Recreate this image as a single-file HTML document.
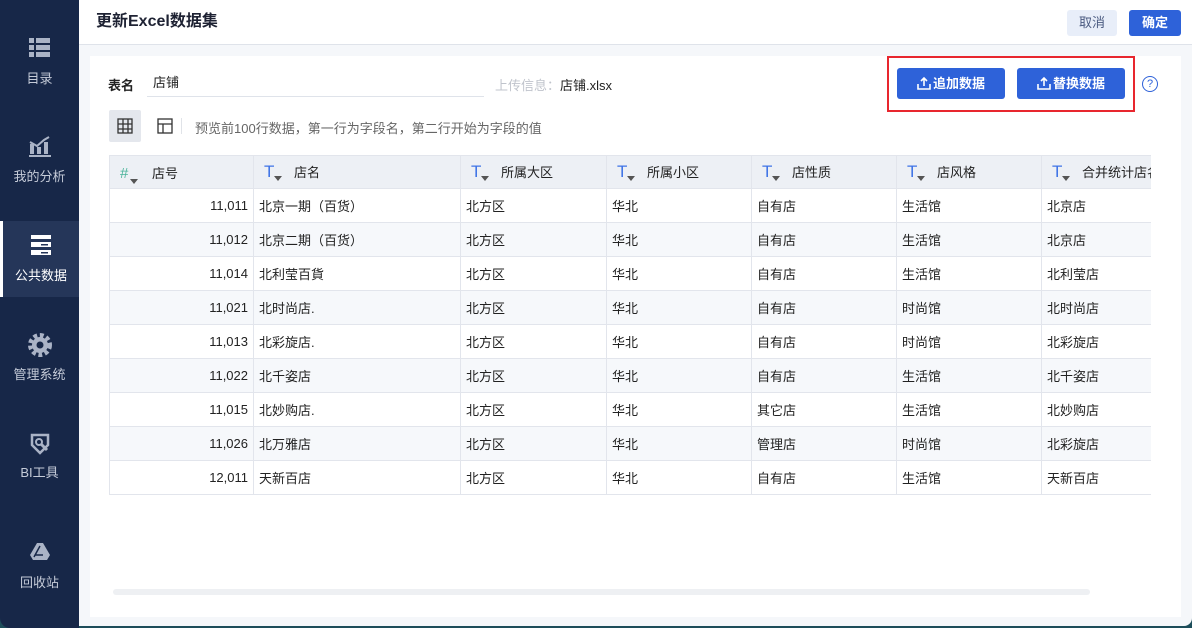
<!DOCTYPE html>
<html><head><meta charset="utf-8"><style>
*{box-sizing:border-box;margin:0;padding:0}
body{width:1192px;height:628px;overflow:hidden;background:#1d4d5a;font-family:"Liberation Sans","Noto Sans CJK SC",sans-serif;position:relative}
.side{position:absolute;left:0;top:0;width:79px;height:628px;background:#172748;border-bottom-left-radius:10px}
.nav{position:absolute;left:0;width:79px;height:70px;text-align:center;color:#c5cbd8;font-size:13px}
.nav .ic{height:26px;margin:12px auto 6px;width:26px;position:relative}
.nav.act{background:#253659;color:#fff;border-left:3px solid #fff}
.main{position:absolute;left:79px;top:0;width:1113px;height:626px;background:#f5f7fa;border-bottom-right-radius:8px}
.hd{height:45px;background:#fff;border-bottom:1px solid #dfe3ea;position:relative}
.hd h1{position:absolute;left:17px;top:12px;font-size:16px;line-height:20px;font-weight:bold;color:#1e2233}
.btn{position:absolute;font-size:13px;border-radius:3px;text-align:center}
.panel{position:absolute;left:11px;top:56px;width:1091px;height:561px;background:#fff}
table{border-collapse:collapse;position:absolute;font-size:13px;color:#222;table-layout:fixed}
td,th{border:1px solid #e2e5ec;height:34px;padding:0 5px;white-space:nowrap;overflow:hidden;font-weight:normal;text-align:left}
th{background:#edf0f5;height:33px;padding-left:10px}
tr:nth-child(odd) td{background:#f6f8fb}
td.n{text-align:right}
.t{color:#3f73e6;font-size:17px;margin-right:20px;position:relative;display:inline-block;width:10px}
.t:after,.h:after{content:"";position:absolute;left:10px;top:14px;border:4px solid transparent;border-top:5px solid #555}
.h{color:#4bb39a;font-size:15px;margin-right:22px;position:relative;display:inline-block;width:10px}
</style></head><body>
<div class="side">
 <div class="nav" style="top:26px"><div class="ic" style="margin-top:10px"><svg width="26" height="22"><g fill="#aab3c6"><rect x="2" y="2" width="5" height="5"/><rect x="9" y="2" width="14" height="5"/><rect x="2" y="9" width="5" height="5"/><rect x="9" y="9" width="14" height="5"/><rect x="2" y="16" width="5" height="5"/><rect x="9" y="16" width="14" height="5"/></g></svg></div>目录</div>
 <div class="nav" style="top:124px"><div class="ic" style="margin-top:10px"><svg width="26" height="24"><g fill="#aab3c6"><rect x="3" y="10" width="4" height="10"/><rect x="10" y="13" width="4" height="7"/><rect x="17" y="8" width="4" height="12"/><rect x="2" y="21" width="22" height="2"/><path d="M3 8l7 4 7-6 5-3" stroke="#aab3c6" stroke-width="2" fill="none"/></g></svg></div>我的分析</div>
 <div class="nav act" style="top:221px;height:76px"><div class="ic" style="margin-top:12px"><svg width="24" height="24"><g fill="#fff"><rect x="2" y="2" width="20" height="4"/><rect x="2" y="9" width="20" height="5"/><rect x="2" y="17" width="20" height="5"/></g><rect x="12" y="11" width="7" height="1.5" fill="#253659"/><rect x="12" y="19" width="7" height="1.5" fill="#253659"/></svg></div>公共数据</div>
 <div class="nav" style="top:322px"><div class="ic" style="margin-top:10px"><svg width="26" height="26"><circle cx="13" cy="13" r="9" fill="none" stroke="#aab3c6" stroke-width="6" stroke-dasharray="3.5 2.5"/><circle cx="13" cy="13" r="8" fill="#aab3c6"/><circle cx="13" cy="13" r="3.5" fill="#172748"/></svg></div>管理系统</div>
 <div class="nav" style="top:420px"><div class="ic" style="margin-top:10px"><svg width="26" height="26"><path d="M5 5h16v10l-8 8-8-8z" fill="none" stroke="#aab3c6" stroke-width="2.5"/><circle cx="12" cy="12" r="3" fill="none" stroke="#aab3c6" stroke-width="2"/><path d="M14 14l6 6" stroke="#aab3c6" stroke-width="3"/></svg></div>BI工具</div>
 <div class="nav" style="top:530px"><div class="ic" style="margin-top:10px"><svg width="26" height="24"><path d="M10 3h6l7 12-3 5H6L3 15z" fill="#aab3c6"/><path d="M13 6l-6 11M16 15H8" stroke="#172748" stroke-width="1.5"/></svg></div>回收站</div>
</div>
<div class="main">
 <div class="hd"><h1>更新Excel数据集</h1>
  <div class="btn" style="left:988px;top:10px;width:50px;height:26px;line-height:26px;background:#e8eef9;color:#4a5a80">取消</div>
  <div class="btn" style="left:1050px;top:10px;width:52px;height:26px;line-height:26px;background:#2e62d9;color:#fff;font-weight:bold">确定</div>
 </div>
 <div class="panel">
  <div style="position:absolute;left:18px;top:19px;font-size:13px;font-weight:bold;color:#222">表名</div>
  <div style="position:absolute;left:57px;top:10px;width:337px;height:31px;border-bottom:1px solid #dfe3ea;font-size:13px;line-height:33px;padding-left:6px;color:#222">店铺</div>
  <div style="position:absolute;left:405px;top:19px;font-size:13px;color:#c0c4cc">上传信息：<span style="color:#222">店铺.xlsx</span></div>
  <div style="position:absolute;left:797px;top:0;width:248px;height:56px;border:2px solid #e8262e"></div>
  <div class="btn" style="left:807px;top:12px;width:108px;height:31px;line-height:31px;background:#2e62d9;color:#fff;font-weight:bold"><svg width="14" height="14" style="vertical-align:-2px;margin-right:2px"><path d="M1 8v5h12V8M7 10V2M4 5l3-3 3 3" fill="none" stroke="#fff" stroke-width="1.6"/></svg>追加数据</div>
  <div class="btn" style="left:927px;top:12px;width:108px;height:31px;line-height:31px;background:#2e62d9;color:#fff;font-weight:bold"><svg width="14" height="14" style="vertical-align:-2px;margin-right:2px"><path d="M1 8v5h12V8M7 10V2M4 5l3-3 3 3" fill="none" stroke="#fff" stroke-width="1.6"/></svg>替换数据</div>
  <div style="position:absolute;left:1052px;top:20px;width:16px;height:16px;border:1.5px solid #2e62d9;border-radius:50%;color:#2e62d9;font-size:11px;text-align:center;line-height:14px">?</div>
  <div style="position:absolute;left:19px;top:54px;width:32px;height:32px;background:#e4e7ed;border-radius:2px"><svg width="32" height="32"><g fill="none" stroke="#333" stroke-width="1.3"><rect x="9" y="9" width="14" height="14"/><path d="M9 14h14M9 19h14M14 9v14M19 9v14"/></g></svg></div>
  <div style="position:absolute;left:59px;top:54px;width:32px;height:32px"><svg width="32" height="32"><g fill="none" stroke="#333" stroke-width="1.3"><rect x="9" y="9" width="14" height="14"/><path d="M9 14h14M14 14v9"/></g></svg></div>
  <div style="position:absolute;left:91px;top:62px;width:1px;height:16px;background:#e0e3e8"></div>
  <div style="position:absolute;left:105px;top:62px;font-size:13px;color:#666">预览前100行数据，第一行为字段名，第二行开始为字段的值</div>
  <div style="position:absolute;left:18px;top:99px;width:1043px;height:340px;overflow:hidden">
  <table style="left:1px;top:0;width:1100px">
   <colgroup><col style="width:144px"><col style="width:207px"><col style="width:146px"><col style="width:145px"><col style="width:145px"><col style="width:145px"><col style="width:168px"></colgroup>
   <tr><th><span class="h">#</span>店号</th><th><span class="t">T</span>店名</th><th><span class="t">T</span>所属大区</th><th><span class="t">T</span>所属小区</th><th><span class="t">T</span>店性质</th><th><span class="t">T</span>店风格</th><th><span class="t">T</span>合并统计店名</th></tr>
   <tr><td class="n">11,011</td><td>北京一期（百货）</td><td>北方区</td><td>华北</td><td>自有店</td><td>生活馆</td><td>北京店</td></tr>
   <tr><td class="n">11,012</td><td>北京二期（百货）</td><td>北方区</td><td>华北</td><td>自有店</td><td>生活馆</td><td>北京店</td></tr>
   <tr><td class="n">11,014</td><td>北利莹百貨</td><td>北方区</td><td>华北</td><td>自有店</td><td>生活馆</td><td>北利莹店</td></tr>
   <tr><td class="n">11,021</td><td>北时尚店.</td><td>北方区</td><td>华北</td><td>自有店</td><td>时尚馆</td><td>北时尚店</td></tr>
   <tr><td class="n">11,013</td><td>北彩旋店.</td><td>北方区</td><td>华北</td><td>自有店</td><td>时尚馆</td><td>北彩旋店</td></tr>
   <tr><td class="n">11,022</td><td>北千姿店</td><td>北方区</td><td>华北</td><td>自有店</td><td>生活馆</td><td>北千姿店</td></tr>
   <tr><td class="n">11,015</td><td>北妙购店.</td><td>北方区</td><td>华北</td><td>其它店</td><td>生活馆</td><td>北妙购店</td></tr>
   <tr><td class="n">11,026</td><td>北万雅店</td><td>北方区</td><td>华北</td><td>管理店</td><td>时尚馆</td><td>北彩旋店</td></tr>
   <tr><td class="n">12,011</td><td>天新百店</td><td>北方区</td><td>华北</td><td>自有店</td><td>生活馆</td><td>天新百店</td></tr>
  </table></div>
  <div style="position:absolute;left:23px;top:533px;width:977px;height:6px;border-radius:3px;background:#eef0f3"></div>
 </div>
</div>
</body></html>
